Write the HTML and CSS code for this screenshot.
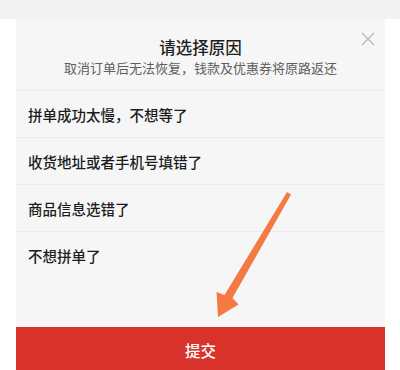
FILE: index.html
```html
<!DOCTYPE html>
<html lang="zh-CN">
<head>
<meta charset="utf-8">
<link rel="stylesheet" href="styles.css">
</head>
<body>
<div class="topbar"></div>
<div class="sheet">
  <div class="header">
    <div class="title">请选择原因</div>
    <div class="subtitle">取消订单后无法恢复，钱款及优惠券将原路返还</div>
    <svg class="close" width="14" height="14" viewBox="0 0 14 14"><path d="M1 1L13 13M13 1L1 13" stroke="#b9b9b9" stroke-width="1.4" fill="none"/></svg>
  </div>
  <div class="row">拼单成功太慢，不想等了</div>
  <div class="row">收货地址或者手机号填错了</div>
  <div class="row">商品信息选错了</div>
  <div class="row">不想拼单了</div>
  <div class="spacer"></div>
  <div class="submit">提交</div>
</div>
<svg class="arrow" width="400" height="370" viewBox="0 0 400 370">
  <path d="M287 192 L291 194.5 L232.5 298 L238.5 304.5 L218 317 L216.5 292 L224.5 295 Z" fill="#f47a44"/>
</svg>
</body>
</html>
```
FILE: styles.css
```css
html, body {
  margin: 0;
  padding: 0;
  background: #ffffff;
  font-family: "Noto Sans CJK SC", "Noto Sans", sans-serif;
}
.topbar {
  height: 19px;
  background: #f2f2f2;
}
.sheet {
  position: relative;
  margin: 0 15px 0 16px;
  height: 351px;
  background: #f6f6f6;
  display: flex;
  flex-direction: column;
}
.header {
  position: relative;
  height: 71px;
  box-sizing: border-box;
  padding-top: 17px;
  text-align: center;
}
.title {
  font-size: 16.5px;
  line-height: 22px;
  font-weight: 500;
  color: #1e1e1e;
}
.subtitle {
  margin-top: 1px;
  font-size: 13px;
  line-height: 18px;
  color: #5e5e5e;
}
.close {
  position: absolute;
  top: 13px;
  right: 10px;
}
.row {
  height: 46px;
  border-top: 1px solid #ececec;
  display: flex;
  align-items: center;
  padding-left: 12px;
  font-size: 14.5px;
  font-weight: 500;
  color: #1c1c1c;
}
.spacer {
  flex: 1;
}
.submit {
  height: 43px;
  background: #d8322b;
  color: #ffffff;
  display: flex;
  align-items: center;
  justify-content: center;
  font-size: 15.5px;
  font-weight: 500;
  padding-top: 2px;
  box-sizing: border-box;
}
.arrow {
  position: absolute;
  left: 0;
  top: 0;
  pointer-events: none;
}
```
